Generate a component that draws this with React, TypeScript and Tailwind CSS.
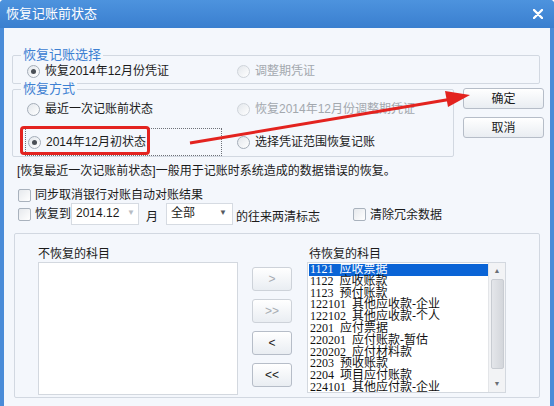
import React from "react";

const font = "font-['Liberation_Sans','Noto_Sans_CJK_SC',sans-serif]";

const accounts = [
    "1121  应收票据",
    "1122  应收账款",
    "1123  预付账款",
    "122101  其他应收款-企业",
    "122102  其他应收款-个人",
    "2201  应付票据",
    "220201  应付账款-暂估",
    "220202  应付材料款",
    "2203  预收账款",
    "2204  项目应付账款",
    "224101  其他应付款-企业",
];

const Radio = ({checked = false, disabled = false}: { checked?: boolean; disabled?: boolean }) => (
    <span
        className={`w-[13px] h-[13px] rounded-full border flex items-center justify-center shrink-0 bg-gradient-to-br from-[#e3e7ec] to-white ${disabled ? "border-[#cfd4da]" : "border-[#a4adb8]"}`}>
        {checked && <span className="w-[5px] h-[5px] rounded-full bg-[#4a4f56]"/>}
    </span>
);

const Check = () => (
    <span className="w-[13px] h-[13px] rounded-[2px] border border-[#a9b2bd] bg-gradient-to-br from-[#e6e9ed] to-white shrink-0"/>
);

const Option = ({label, checked, disabled, width}: {
    label: string;
    checked?: boolean;
    disabled?: boolean;
    width?: string
}) => (
    <div className={`flex items-center gap-[5px] pl-[2px] ${width ?? ""}`}>
        <Radio checked={checked} disabled={disabled}/>
        <span className={`text-[12px] leading-[16px] whitespace-nowrap ${disabled ? "text-[#a3a8ae]" : "text-[#1b1b1b]"}`}>{label}</span>
    </div>
);

const Group = ({title, className, children}: { title: string; className: string; children: React.ReactNode }) => (
    <div className={`relative border border-[#d2d8e1] rounded-[2px] ${className}`}>
        <span
            className="absolute left-[8px] -top-[9px] px-[2px] bg-[#f4f7fc] text-[13px] leading-[16px] text-[#3d80d2]">{title}</span>
        {children}
    </div>
);

const DialogButton = ({label, disabled, className}: { label: string; disabled?: boolean; className: string }) => (
    <button
        className={`rounded-[3px] border border-[#b6bdc8] bg-gradient-to-b from-white to-[#e9edf2] text-[12px] flex items-center justify-center ${disabled ? "text-[#a6abb2] border-[#cdd2d9]" : "text-[#1b1b1b]"} ${className}`}>
        {label}
    </button>
);

const App: React.FC = () => {
    return (
        <div className={`relative w-[554px] h-[406px] bg-[#4a8cd8] flex flex-col overflow-hidden rounded-t-[4px] ${font}`}>
            {/* title bar */}
            <div
                className="h-[28px] shrink-0 flex items-center justify-between pl-[6px] pr-[11px] bg-gradient-to-b from-[#4d93de] to-[#3a7fcf]">
                <span className="text-white text-[13px] leading-[16px]">恢复记账前状态</span>
                <svg width="10" height="10" viewBox="0 0 10 10">
                    <path d="M1 1 L9 9 M9 1 L1 9" stroke="white" strokeWidth="2.4" strokeLinecap="round"/>
                </svg>
            </div>

            <div className="flex-1 mx-[4px] bg-[#f4f7fc] flex flex-col">
                <Group title="恢复记账选择" className="mt-[27px] ml-[8px] w-[528px] h-[29px]">
                    <div className="h-full flex items-center pt-[3px] pl-[12px]">
                        <Option label="恢复2014年12月份凭证" checked width="w-[210px]"/>
                        <Option label="调整期凭证" disabled/>
                    </div>
                </Group>

                <div className="flex mt-[5px]">
                    <Group title="恢复方式" className="ml-[8px] w-[442px] h-[68px]">
                        <div className="flex flex-col pl-[12px] pt-[10px]">
                            <div className="flex items-center h-[18px]">
                                <Option label="最近一次记账前状态" width="w-[210px]"/>
                                <Option label="恢复2014年12月份调整期凭证" disabled/>
                            </div>
                            <div className="flex items-center h-[28px] mt-[10px]">
                                <div
                                    className="w-[197px] h-[28px] mr-[13px] border border-dotted border-[#6d7178] flex items-center">
                                    <Option label="2014年12月初状态" checked/>
                                </div>
                                <Option label="选择凭证范围恢复记账"/>
                            </div>
                        </div>
                    </Group>
                    <div className="ml-[9px] -mt-[1px] w-[81px] flex flex-col">
                        <DialogButton label="确定" className="h-[21px]"/>
                        <DialogButton label="取消" className="h-[21px] mt-[8px]"/>
                    </div>
                </div>

                <p className="mt-[6px] ml-[13px] text-[12px] leading-[16px] text-[#1b1b1b] whitespace-nowrap">
                    [恢复最近一次记账前状态]一般用于记账时系统造成的数据错误的恢复。
                </p>

                <div className="mt-[8px] ml-[14px] h-[16px] flex items-center gap-[4px]">
                    <Check/>
                    <span className="text-[12px] leading-[16px] text-[#1b1b1b]">同步取消银行对账自动对账结果</span>
                </div>

                <div className="ml-[14px] h-[22px] flex items-center text-[12px] text-[#1b1b1b]">
                    <Check/>
                    <span className="ml-[4px] w-[34px] whitespace-nowrap">恢复到</span>
                    <div
                        className="ml-[2px] w-[68px] h-[22px] bg-white border border-[#d6dbe2] flex items-start justify-between pl-[4px] pr-[3px] pt-[2px]">
                        <span className="leading-[14px]">2014.12</span>
                        <span className="text-[8px] text-[#b7bcc3] leading-[14px]">▼</span>
                    </div>
                    <span className="ml-[7px] mt-[6px]">月</span>
                    <div
                        className="ml-[8px] w-[67px] h-[22px] bg-white border border-[#d6dbe2] flex items-start justify-between pl-[4px] pr-[5px] pt-[2px]">
                        <span className="leading-[14px]">全部</span>
                        <span className="text-[8px] text-[#55595f] leading-[14px]">▼</span>
                    </div>
                    <span className="ml-[3px] mt-[6px] w-[117px] whitespace-nowrap">的往来两清标志</span>
                    <Check/>
                    <span className="ml-[4px] mt-[2px]">清除冗余数据</span>
                </div>

                <div className="mt-[8px] ml-[10px] w-[526px] h-[165px] border border-[#d2d8e1] rounded-[2px] flex pl-[23px]">
                    <div className="flex flex-col">
                        <span className="pt-[12px] h-[28px] text-[12px] leading-[16px] text-[#1b1b1b]">不恢复的科目</span>
                        <div className="w-[200px] h-[133px] bg-white border border-[#d3d8df]"/>
                    </div>
                    <div className="ml-[14px] pt-[33px] flex flex-col gap-[8px]">
                        <DialogButton label=">" disabled className="w-[40px] h-[24px]"/>
                        <DialogButton label=">>" disabled className="w-[40px] h-[24px]"/>
                        <DialogButton label="<" className="w-[40px] h-[24px]"/>
                        <DialogButton label="<<" className="w-[40px] h-[24px]"/>
                    </div>
                    <div className="ml-[15px] flex flex-col">
                        <span className="pt-[12px] h-[28px] pl-[2px] text-[12px] leading-[16px] text-[#1b1b1b]">待恢复的科目</span>
                        <div className="w-[199px] h-[131px] bg-white border border-[#d3d8df] flex overflow-hidden">
                            <ul className="flex-1 pt-[1px] pl-[1px] font-['Liberation_Serif','Noto_Sans_CJK_SC',serif] text-[12px] leading-[11.8px] text-[#111]">
                                {accounts.map((a, i) => (
                                    <li key={a}
                                        className={`whitespace-pre pl-[1px] ${i === 0 ? "bg-[#0a64d6] text-white" : ""}`}>{a}</li>
                                ))}
                            </ul>
                            <div className="w-[17px] bg-[#f2f3f5] border-l border-[#e3e5e8] flex flex-col items-center">
                                <span className="h-[16px] text-[7px] leading-[16px] text-[#6b6f75]">▲</span>
                                <div
                                    className="w-[13px] h-[90px] rounded-[2px] border border-[#c8ccd2] bg-gradient-to-r from-[#e4e6ea] to-[#d3d6db]"/>
                                <div className="flex-1"/>
                                <span className="h-[16px] text-[7px] leading-[16px] text-[#6b6f75]">▼</span>
                            </div>
                        </div>
                    </div>
                </div>
            </div>

            {/* annotation overlay */}
            <div className="absolute left-[20px] top-[126px] w-[130px] h-[29px] border-[3px] border-[#e3231f] rounded-[4px] pointer-events-none"/>
            <svg className="absolute inset-0 pointer-events-none" width="554" height="406" viewBox="0 0 554 406">
                <line x1="190" y1="143" x2="452" y2="99" stroke="#e3231f" strokeWidth="3"/>
                <polygon points="470,95 448,107 445,91" fill="#e3231f"/>
            </svg>
        </div>
    );
};

export default App;
